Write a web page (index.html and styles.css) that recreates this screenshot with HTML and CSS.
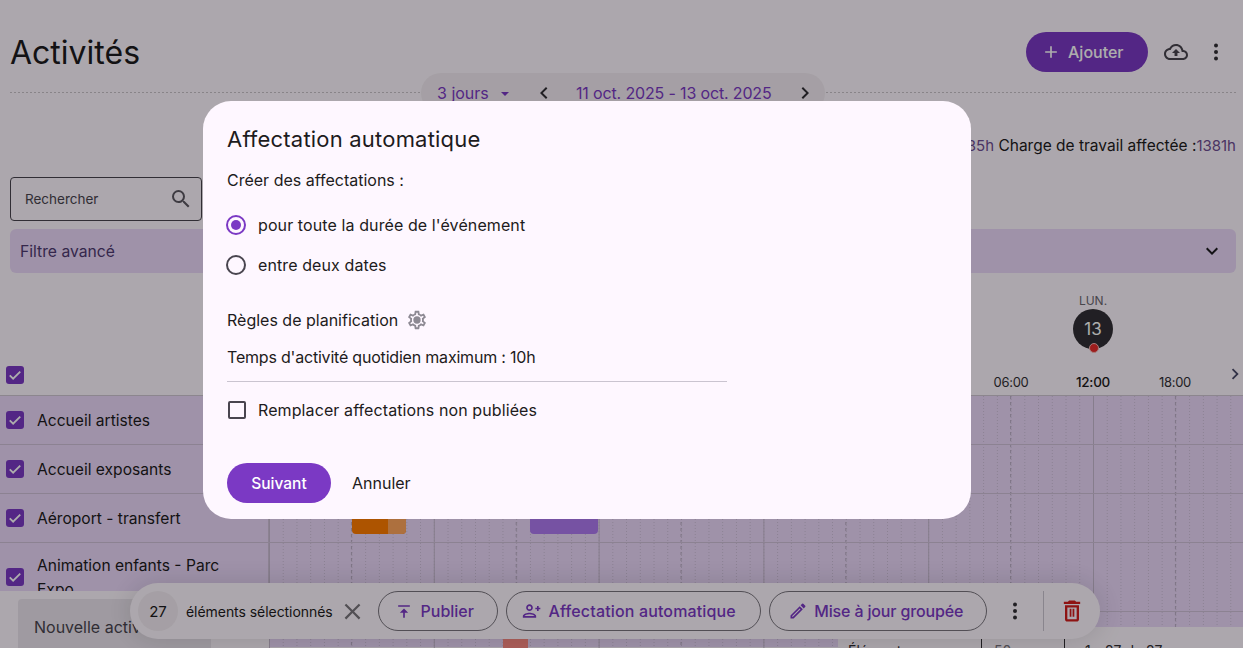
FILE: index.html
```html
<!DOCTYPE html>
<html lang="fr">
<head>
    <meta charset="UTF-8">
    <meta name="viewport" content="width=device-width, initial-scale=1.0">
    <title>Activités</title>
    <link rel="stylesheet" href="styles.css">
</head>
<body>
    <div class="page">
        <header class="top-bar">
            <h1>Activités</h1>
            <div class="top-actions">
                <button class="btn-add">
                    <svg viewBox="0 0 24 24"><path d="M19 13h-6v6h-2v-6H5v-2h6V5h2v6h6z"/></svg>Ajouter
                </button>
                <svg class="icon-upload" viewBox="0 0 24 24"><path d="M19.35 10.04C18.67 6.59 15.64 4 12 4 9.11 4 6.6 5.64 5.35 8.04 2.34 8.36 0 10.91 0 14c0 3.31 2.69 6 6 6h13c2.76 0 5-2.24 5-5 0-2.64-2.05-4.78-4.65-4.96zM19 18H6c-2.21 0-4-1.79-4-4 0-2.05 1.53-3.76 3.56-3.97l1.07-.11.5-.95C8.08 7.14 9.94 6 12 6c2.62 0 4.88 1.86 5.39 4.43l.3 1.5 1.53.11c1.56.1 2.78 1.41 2.78 2.96 0 1.65-1.35 3-3 3zM8 13h2.55v3h2.9v-3H16l-4-4z"/></svg>
                <svg class="icon-more" viewBox="0 0 24 24"><circle cx="12" cy="5.5" r="2"/><circle cx="12" cy="12" r="2"/><circle cx="12" cy="18.5" r="2"/></svg>
            </div>
        </header>

        <div class="date-wrap">
            <div class="date-pill">
                <span class="range-select">3 jours</span>
                <span class="caret"></span>
                <svg class="chev chev-prev" viewBox="0 0 24 24"><path d="M15.4 7.4 14 6l-6 6 6 6 1.4-1.4L10.8 12z"/></svg>
                <span class="range-dates">11 oct. 2025 - 13 oct. 2025</span>
                <svg class="chev chev-next" viewBox="0 0 24 24"><path d="M8.6 16.6 10 18l6-6-6-6-1.4 1.4 4.6 4.6z"/></svg>
            </div>
        </div>

        <p class="workload">Charge de travail totale :<b>2385h</b> Charge de travail affectée :<b>1381h</b></p>

        <div class="search-box">
            <span>Rechercher</span>
            <svg viewBox="0 0 24 24"><path d="M15.5 14h-.79l-.28-.27A6.47 6.47 0 0 0 16 9.5 6.5 6.5 0 1 0 9.5 16c1.61 0 3.09-.59 4.23-1.57l.27.28v.79l5 4.99L20.49 19l-4.99-5zm-6 0C7.01 14 5 11.99 5 9.5S7.01 5 9.5 5 14 7.01 14 9.5 11.99 14 9.5 14z"/></svg>
        </div>

        <div class="filter-bar">
            <span>Filtre avancé</span>
            <svg viewBox="0 0 24 24"><path d="M7.4 8.6 6 10l6 6 6-6-1.4-1.4-4.6 4.6z"/></svg>
        </div>

        <div class="cal-head">
            <div class="check-all">
                <span class="check"><svg viewBox="0 0 24 24"><path d="M5 12.5l4.5 4.5L19 7.5"/></svg></span>
            </div>
            <div class="day-head">
                <span class="day-name">LUN.</span>
                <span class="day-num">13</span>
                <div class="hours">
                    <span>06:00</span>
                    <span class="noon">12:00</span>
                    <span>18:00</span>
                </div>
            </div>
            <svg class="head-next" viewBox="0 0 24 24"><path d="M8.6 16.6 10 18l6-6-6-6-1.4 1.4 4.6 4.6z"/></svg>
        </div>

        <div class="planner">
            <div class="names">
                <div class="name-row"><span class="check"><svg viewBox="0 0 24 24"><path d="M5 12.5l4.5 4.5L19 7.5"/></svg></span><span class="name">Accueil artistes</span></div>
                <div class="name-row"><span class="check"><svg viewBox="0 0 24 24"><path d="M5 12.5l4.5 4.5L19 7.5"/></svg></span><span class="name">Accueil exposants</span></div>
                <div class="name-row"><span class="check"><svg viewBox="0 0 24 24"><path d="M5 12.5l4.5 4.5L19 7.5"/></svg></span><span class="name">Aéroport - transfert</span></div>
                <div class="name-row name-row-tall"><span class="check"><svg viewBox="0 0 24 24"><path d="M5 12.5l4.5 4.5L19 7.5"/></svg></span><span class="name">Animation enfants - Parc Expo</span></div>
            </div>

            <div class="timeline">
                <svg class="tl-grid" width="974" height="252">
                    <defs>
                        <pattern id="hour" width="13.733" height="3" patternUnits="userSpaceOnUse">
                            <line x1="0.5" y1="0" x2="0.5" y2="1" class="line-hour"/>
                        </pattern>
                        <pattern id="day" width="164.8" height="6" patternUnits="userSpaceOnUse">
                            <line x1="0.5" y1="0" x2="0.5" y2="6" class="line-half"/>
                            <line x1="82.5" y1="0" x2="82.5" y2="3" class="line-six"/>
                        </pattern>
                    </defs>
                    <rect width="974" height="252" fill="url(#hour)"/>
                    <rect width="974" height="252" fill="url(#day)"/>
                </svg>
                <div class="tl-row"></div>
                <div class="tl-row"></div>
                <div class="tl-row">
                    <div class="event event-orange"><span class="event-done"></span></div>
                    <div class="event event-purple"></div>
                </div>
                <div class="tl-row tl-row-tall"></div>
                <div class="tl-row tl-row-last">
                    <div class="event event-red"></div>
                </div>
            </div>
        </div>

        <div class="new-activity">
            <div class="new-input">Nouvelle activité</div>
        </div>

        <div class="paginator">
            <span class="pg-label">Éléments par page</span>
            <span class="pg-size">50</span>
            <span class="pg-count">1 - 27 de 27</span>
            <svg viewBox="0 0 24 24"><path d="M15.4 7.4 14 6l-6 6 6 6 1.4-1.4L10.8 12z"/></svg>
            <svg viewBox="0 0 24 24"><path d="M8.6 16.6 10 18l6-6-6-6-1.4 1.4 4.6 4.6z"/></svg>
        </div>

        <div class="bulk-bar">
            <span class="bulk-count">27</span>
            <span class="bulk-label">éléments sélectionnés</span>
            <svg class="bulk-close" viewBox="0 0 24 24"><path d="M19 6.41 17.59 5 12 10.59 6.41 5 5 6.41 10.59 12 5 17.59 6.41 19 12 13.41 17.59 19 19 17.59 13.41 12z"/></svg>
            <button class="btn-outline btn-publish">
                <svg viewBox="0 0 24 24"><path d="M5 5h14v2H5zM12 9l-5 5h4v6h2v-6h4z"/></svg>Publier
            </button>
            <button class="btn-outline btn-auto">
                <svg viewBox="0 0 24 24"><path d="M15 12c2.21 0 4-1.79 4-4s-1.79-4-4-4-4 1.79-4 4 1.79 4 4 4zm0-6c1.1 0 2 .9 2 2s-.9 2-2 2-2-.9-2-2 .9-2 2-2zm0 8c-2.67 0-8 1.34-8 4v2h16v-2c0-2.66-5.33-4-8-4zm-6 4c.22-.72 3.31-2 6-2 2.7 0 5.8 1.29 6 2H9zM6 12v-2h2V8H6V6H4v2H2v2h2v2z" transform="matrix(-1 0 0 1 24 0)"/></svg>Affectation automatique
            </button>
            <button class="btn-outline btn-group">
                <svg viewBox="0 0 24 24"><path d="M3 17.25V21h3.75L17.81 9.94l-3.75-3.75L3 17.25zM5.92 19H5v-.92l9.06-9.06.92.92L5.92 19zM20.71 7.04a1 1 0 0 0 0-1.41l-2.34-2.34a1 1 0 0 0-1.41 0l-1.83 1.83 3.75 3.75 1.83-1.83z"/></svg>Mise à jour groupée
            </button>
            <svg class="bulk-more" viewBox="0 0 24 24"><circle cx="12" cy="5.5" r="2"/><circle cx="12" cy="12" r="2"/><circle cx="12" cy="18.5" r="2"/></svg>
            <span class="bulk-sep"></span>
            <svg class="bulk-trash" viewBox="0 0 24 24"><path d="M16 9v10H8V9h8m-1.5-6h-5l-1 1H5v2h14V4h-3.5l-1-1zM18 7H6v12c0 1.1.9 2 2 2h8c1.1 0 2-.9 2-2V7zM10 10h1.5v7H10zM12.5 10H14v7h-1.5z"/></svg>
        </div>
    </div>

    <div class="scrim">
        <div class="dialog">
            <h2>Affectation automatique</h2>
            <p class="dialog-label">Créer des affectations :</p>
            <label class="radio-row"><span class="radio radio-on"></span>pour toute la durée de l'événement</label>
            <label class="radio-row"><span class="radio"></span>entre deux dates</label>
            <div class="rules-title">
                <span>Règles de planification</span>
                <svg viewBox="0 0 24 24"><path d="M19.43 12.98c.04-.32.07-.64.07-.98 0-.34-.03-.66-.07-.98l2.11-1.65c.19-.15.24-.42.12-.64l-2-3.46c-.09-.16-.26-.25-.44-.25-.06 0-.12.01-.17.03l-2.49 1c-.52-.4-1.08-.73-1.69-.98l-.38-2.65C14.46 2.18 14.25 2 14 2h-4c-.25 0-.46.18-.49.42l-.38 2.65c-.61.25-1.17.59-1.69.98l-2.49-1c-.06-.02-.12-.03-.18-.03-.17 0-.34.09-.43.25l-2 3.46c-.13.22-.07.49.12.64l2.11 1.65c-.04.32-.07.65-.07.98 0 .33.03.66.07.98l-2.11 1.65c-.19.15-.24.42-.12.64l2 3.46c.09.16.26.25.44.25.06 0 .12-.01.17-.03l2.49-1c.52.4 1.08.73 1.69.98l.38 2.65c.03.24.24.42.49.42h4c.25 0 .46-.18.49-.42l.38-2.65c.61-.25 1.17-.59 1.69-.98l2.49 1c.06.02.12.03.18.03.17 0 .34-.09.43-.25l2-3.46c.12-.22.07-.49-.12-.64l-2.11-1.65zm-1.98-1.71c.04.31.05.52.05.73 0 .21-.02.43-.05.73l-.14 1.13.89.7 1.08.84-.7 1.21-1.27-.51-1.04-.42-.9.68c-.43.32-.84.56-1.25.73l-1.06.43-.16 1.13-.2 1.35h-1.4l-.19-1.35-.16-1.13-1.06-.43c-.43-.18-.83-.41-1.23-.71l-.91-.7-1.06.43-1.27.51-.7-1.21 1.08-.84.89-.7-.14-1.13c-.03-.31-.05-.54-.05-.74s.02-.43.05-.73l.14-1.13-.89-.7-1.08-.84.7-1.21 1.27.51 1.04.42.9-.68c.43-.32.84-.56 1.25-.73l1.06-.43.16-1.13.2-1.35h1.39l.19 1.35.16 1.13 1.06.43c.43.18.83.41 1.23.71l.91.7 1.06-.43 1.27-.51.7 1.21-1.07.85-.89.7.14 1.13z"/><circle cx="12" cy="12" r="4"/></svg>
            </div>
            <p class="rules-value">Temps d'activité quotidien maximum : 10h</p>
            <label class="check-row"><span class="box"></span>Remplacer affectations non publiées</label>
            <div class="dialog-actions">
                <button class="btn-next">Suivant</button>
                <button class="btn-cancel">Annuler</button>
            </div>
        </div>
    </div>
</body>
</html>
```

FILE: styles.css
```css
* {
    box-sizing: border-box;
}

html, body {
    height: 100%;
}

body {
    margin: 0;
    height: 648px;
    overflow: hidden;
    position: relative;
    font-family: Inter, "Liberation Sans", sans-serif;
    font-size: 16px;
    color: #1d1b20;
    background-color: #fef7ff;
}

button {
    font-family: inherit;
    cursor: pointer;
}

svg {
    display: block;
    fill: currentColor;
}

.page {
    height: 648px;
    overflow: hidden;
    position: relative;
}

/* header */
.top-bar {
    display: flex;
    justify-content: space-between;
    align-items: flex-start;
    height: 93px;
    margin: 0 7px 0 10px;
    padding-top: 32px;
    background: repeating-linear-gradient(to right, #c9c3c9 0 2px, transparent 2px 4px) left bottom / 100% 1px no-repeat;
}

h1 {
    margin: 1px 0 0;
    font-size: 32px;
    font-weight: 400;
    line-height: 40px;
}

.top-actions {
    display: flex;
    align-items: center;
    height: 40px;
}

.btn-add {
    display: flex;
    align-items: center;
    width: 122px;
    height: 40px;
    padding: 0 0 0 15px;
    border: none;
    border-radius: 20px;
    background-color: #7b39c4;
    color: #fff;
    font-size: 16px;
    font-weight: 450;
}

.btn-add svg {
    width: 20px;
    height: 20px;
    margin-right: 7px;
}

.icon-upload {
    width: 24px;
    height: 24px;
    margin-left: 16px;
    color: #49454f;
}

.icon-more {
    width: 24px;
    height: 24px;
    margin-left: 16px;
    margin-right: 8px;
    color: #322f35;
}

/* date range */
.date-wrap {
    display: flex;
    justify-content: center;
    margin-top: -20px;
    padding-left: 3px;
}

.date-pill {
    display: flex;
    align-items: center;
    width: 404px;
    height: 40px;
    padding-left: 16px;
    border-radius: 20px;
    background-color: #f3ebf3;
    color: #7b39c4;
    font-size: 16px;
}

.range-select {
    width: 56px;
}

.caret {
    width: 0;
    height: 0;
    border-left: 4px solid transparent;
    border-right: 4px solid transparent;
    border-top: 4px solid #7b39c4;
    margin: 1px 0 0 8px;
}

.chev {
    width: 24px;
    height: 24px;
    color: #322f35;
}

.chev-prev {
    margin-left: 23px;
}

.range-dates {
    width: 196px;
    margin-left: 20px;
    letter-spacing: -0.15px;
    white-space: nowrap;
}

.chev-next {
    margin-left: 21px;
}

/* workload */
.workload {
    margin: 21px 7px 0 0;
    line-height: 24px;
    text-align: right;
    font-size: 15.5px;
    white-space: nowrap;
}

.workload b {
    font-weight: 400;
    font-size: 15px;
    color: #6f4e93;
}

/* search and filter */
.search-box {
    display: flex;
    align-items: center;
    justify-content: space-between;
    width: 192px;
    height: 44px;
    margin: 19px 0 0 10px;
    padding: 0 8px 0 14px;
    border: 1px solid #49454f;
    border-radius: 4px;
    font-size: 13.5px;
    color: #49454f;
}

.search-box svg {
    width: 24px;
    height: 24px;
    color: #5c5862;
}

.filter-bar {
    display: flex;
    align-items: center;
    justify-content: space-between;
    height: 44px;
    margin: 8px 7px 0 10px;
    padding: 0 12px 0 10px;
    border-radius: 6px;
    background-color: #ebd8fa;
    color: #4f3a70;
    font-size: 15.7px;
}

.filter-bar svg {
    width: 24px;
    height: 24px;
    color: #1d1b20;
}

/* calendar head */
.cal-head {
    display: flex;
    height: 123px;
    position: relative;
}

.check-all {
    width: 929px;
    flex-shrink: 0;
    padding: 93px 0 0 6px;
}

.day-head {
    display: flex;
    flex-direction: column;
    align-items: center;
    width: 328px;
    padding-top: 20px;
    flex-shrink: 0;
}

.day-name {
    font-size: 12px;
    line-height: 15px;
    color: #6b6770;
}

.day-num {
    display: flex;
    align-items: center;
    justify-content: center;
    width: 40px;
    height: 40px;
    margin-top: 1px;
    border-radius: 50%;
    background-color: #322f35;
    color: #fff;
    font-size: 17px;
    position: relative;
}

.day-num::after {
    content: "";
    position: absolute;
    left: 16px;
    bottom: -4px;
    width: 8px;
    height: 8px;
    border-radius: 50%;
    background-color: #e82c2c;
    border: 1px solid #f4b8b8;
}

.hours {
    display: flex;
    width: 100%;
    margin-top: 25px;
    padding-left: 41px;
    font-size: 13px;
    letter-spacing: -0.3px;
    color: #322f35;
}

.hours span {
    width: 82px;
    text-align: center;
}

.hours .noon {
    font-size: 13.5px;
    font-weight: 500;
    color: #1d1b20;
}

.head-next {
    position: absolute;
    top: 90px;
    left: 1224px;
    width: 22px;
    height: 22px;
    color: #4a4a6a;
}

/* checks */
.check {
    display: block;
    flex-shrink: 0;
    width: 18px;
    height: 18px;
    border-radius: 3px;
    background-color: #7b39c4;
}

.check svg {
    width: 18px;
    height: 18px;
    fill: none;
    stroke: #fff;
    stroke-width: 2.4;
}

/* planner */
.planner {
    display: flex;
    height: 252px;
    border-top: 1px solid #cfc6d2;
    margin-top: -1px;
}

.names {
    width: 269px;
    flex-shrink: 0;
    background-color: #ebd8fa;
    border-right: 1px solid #cfc0d8;
}

.name-row {
    display: flex;
    align-items: center;
    height: 49px;
    padding: 0 20px 0 6px;
    border-bottom: 1px solid #cfc0d8;
    font-size: 15.6px;
    line-height: 24px;
}

.name-row .check {
    margin-right: 13px;
}

.name {
    padding-top: 2px;
}

.name-row-tall {
    height: 69px;
    padding-bottom: 1px;
    border-bottom: none;
}

.name-row-tall .name {
    padding-top: 1px;
}

.timeline {
    flex: 1;
    position: relative;
    background-color: #ebd8fa;
}

.tl-grid {
    position: absolute;
    left: 0;
    top: 0;
}

.line-hour {
    stroke: #cdbfd8;
    stroke-width: 1;
}

.line-six {
    stroke: #b5a8bf;
    stroke-width: 1;
}

.line-half {
    stroke: #c6b9cf;
    stroke-width: 1;
}

.tl-row {
    height: 49px;
    border-bottom: 1px solid #cfc0d8;
    position: relative;
}

.tl-row-tall {
    height: 69px;
}

.tl-row-last {
    height: 36px;
    border-bottom: none;
}

.event {
    position: absolute;
    border-radius: 0 0 4px 4px;
}

.event-orange {
    left: 83px;
    top: 0;
    width: 54px;
    height: 40px;
    background-color: #ff7d00;
    overflow: hidden;
}

.event-done {
    display: block;
    width: 18px;
    height: 100%;
    margin-left: 36px;
    background-color: #ffa55c;
}

.event-purple {
    left: 261px;
    top: 0;
    width: 68px;
    height: 40px;
    background-color: #ae79f0;
}

.event-red {
    left: 234px;
    top: 0;
    width: 25px;
    height: 36px;
    border-radius: 0;
    background-color: #ff8c85;
}

/* left footer */
.new-activity {
    position: absolute;
    left: 0;
    top: 591px;
    width: 269px;
    height: 57px;
    padding: 8px 0 0 18px;
    background-color: #fef7ff;
}

.new-input {
    width: 193px;
    height: 49px;
    padding: 18px 0 0 16px;
    border-radius: 4px 4px 0 0;
    background-color: #ebe4ee;
    color: #49454f;
    font-size: 16px;
    white-space: nowrap;
}

/* paginator */
.paginator {
    position: absolute;
    left: 838px;
    top: 627px;
    width: 405px;
    height: 40px;
    display: flex;
    align-items: flex-start;
    padding-top: 15px;
    background-color: #fef7ff;
    font-size: 14px;
    color: #322f35;
}

.paginator > * {
    flex-shrink: 0;
}

.pg-label {
    width: 144px;
    padding: 3px 0 0 10px;
    border-right: 1px solid #322f35;
    height: 40px;
    margin-top: -3px;
    white-space: nowrap;
}

.pg-size {
    width: 83px;
    padding: 3px 0 0 12px;
    border-right: 1px solid #322f35;
    height: 40px;
    margin-top: -3px;
    color: #7a7680;
}

.pg-count {
    width: 113px;
    padding-left: 20px;
}

.paginator svg {
    width: 24px;
    height: 24px;
    margin-right: 18px;
    color: #9a96a0;
}

/* selection bar */
.bulk-bar {
    position: absolute;
    left: 130px;
    top: 583px;
    width: 970px;
    height: 56px;
    display: flex;
    align-items: center;
    padding-left: 8px;
    border-radius: 28px;
    background-color: #fef7ff;
    box-shadow: 0 0 28px rgba(0, 0, 0, 0.14);
}

.bulk-count {
    display: flex;
    align-items: center;
    justify-content: center;
    width: 40px;
    height: 40px;
    border-radius: 50%;
    background-color: #f3ebf3;
    font-size: 15px;
}

.bulk-label {
    margin-left: 8px;
    font-size: 14px;
    letter-spacing: -0.05px;
    white-space: nowrap;
}

.bulk-close {
    width: 27px;
    height: 27px;
    margin-left: 6px;
    color: #79757c;
}

.btn-outline {
    display: flex;
    align-items: center;
    justify-content: center;
    height: 40px;
    padding: 0;
    border: 1px solid #79747e;
    border-radius: 20px;
    background: transparent;
    color: #7b39c4;
    font-size: 16px;
    font-weight: 450;
    flex-shrink: 0;
}

.btn-outline svg {
    width: 20px;
    height: 20px;
    margin-right: 6px;
}

.btn-publish {
    width: 120px;
    margin-left: 12px;
    padding-right: 7px;
}

.btn-auto {
    width: 255px;
    margin-left: 8px;
    padding-right: 8px;
    letter-spacing: 0.15px;
}

.btn-group {
    width: 218px;
    margin-left: 8px;
    padding-right: 4px;
    letter-spacing: -0.15px;
}

.bulk-more {
    width: 24px;
    height: 24px;
    margin-left: 16px;
    color: #322f35;
}

.bulk-sep {
    width: 1px;
    height: 40px;
    margin-left: 16px;
    background-color: #cac4d0;
}

.bulk-trash {
    width: 28px;
    height: 28px;
    margin-left: 14px;
    color: #d21c1c;
}

/* dialog */
.scrim {
    position: absolute;
    left: 0;
    top: 0;
    width: 100%;
    height: 648px;
    padding: 101px 0 0 203px;
    background-color: rgba(0, 0, 0, 0.32);
}

.dialog {
    width: 768px;
    height: 418px;
    padding: 24px 24px 0;
    border-radius: 28px;
    background-color: #fef7ff;
    font-size: 16px;
}

h2 {
    margin: 0;
    font-size: 22px;
    font-weight: 400;
    line-height: 28px;
    letter-spacing: 0.2px;
}

.dialog-label {
    margin: 15px 0 0;
    line-height: 24px;
}

.radio-row {
    display: flex;
    align-items: center;
    height: 40px;
    letter-spacing: 0.1px;
}

.dialog-label + .radio-row {
    margin-top: 13px;
}

.radio {
    display: block;
    width: 20px;
    height: 20px;
    margin: 0 12px 0 -1px;
    border: 2px solid #49454f;
    border-radius: 50%;
}

.radio-on {
    border-color: #7b39c4;
    position: relative;
}

.radio-on::after {
    content: "";
    position: absolute;
    left: 3px;
    top: 3px;
    width: 10px;
    height: 10px;
    border-radius: 50%;
    background-color: #7b39c4;
}

.rules-title {
    display: flex;
    align-items: center;
    height: 24px;
    margin-top: 23px;
}

.rules-title svg {
    width: 22px;
    height: 22px;
    margin-left: 8px;
    color: #8d8993;
}

.rules-value {
    width: 500px;
    height: 37px;
    margin: 13px 0 0;
    line-height: 24px;
    letter-spacing: -0.2px;
    border-bottom: 1px solid #cac4d0;
    white-space: nowrap;
}

.check-row {
    display: flex;
    align-items: center;
    height: 24px;
    margin-top: 16px;
    letter-spacing: 0.1px;
}

.box {
    display: block;
    width: 18px;
    height: 18px;
    margin: 0 12px 0 1px;
    border: 2px solid #49454f;
    border-radius: 2px;
}

.dialog-actions {
    display: flex;
    align-items: center;
    margin-top: 41px;
}

.btn-next {
    width: 104px;
    height: 40px;
    border: none;
    border-radius: 20px;
    background-color: #7b39c4;
    color: #fff;
    font-size: 15.5px;
    font-weight: 450;
}

.btn-cancel {
    margin-left: 21px;
    padding: 0;
    border: none;
    background: transparent;
    color: #1d1b20;
    font-size: 16px;
}
```
